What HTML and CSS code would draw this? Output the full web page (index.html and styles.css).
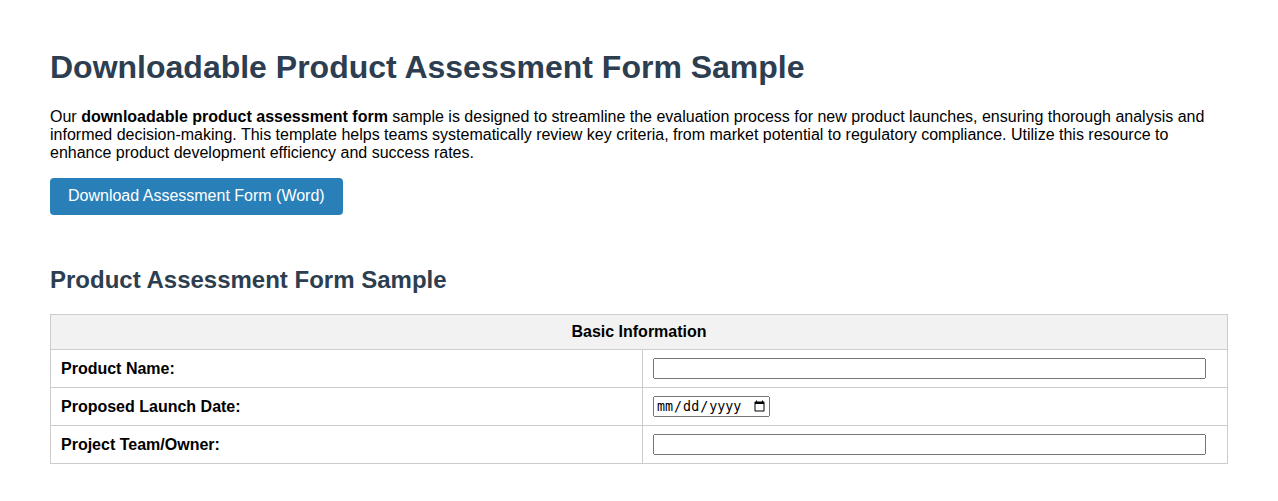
FILE: index.html
```html
<!DOCTYPE html>
<html lang="en">
<head>
<meta charset="utf-8">
<title>Downloadable Product Assessment Form Sample</title>
<link rel="stylesheet" href="styles.css">
</head>
<body>
<main class="page">
  <h1 class="title">Downloadable Product Assessment Form Sample</h1>
  <p class="intro">Our <strong>downloadable product assessment form</strong> sample is designed to streamline the evaluation process for new product launches, ensuring thorough analysis and informed decision-making. This template helps teams systematically review key criteria, from market potential to regulatory compliance. Utilize this resource to enhance product development efficiency and success rates.</p>
  <div class="actions">
    <a class="btn" href="#">Download Assessment Form (Word)</a>
  </div>
  <h2 class="subtitle">Product Assessment Form Sample</h2>
  <table class="form-table">
    <thead>
      <tr><th colspan="2" class="section">Basic Information</th></tr>
    </thead>
    <tbody>
      <tr>
        <td class="label">Product Name:</td>
        <td class="field"><input type="text" class="text-input"></td>
      </tr>
      <tr>
        <td class="label">Proposed Launch Date:</td>
        <td class="field"><input type="date" class="date-input"></td>
      </tr>
      <tr>
        <td class="label">Project Team/Owner:</td>
        <td class="field"><input type="text" class="text-input"></td>
      </tr>
    </tbody>
  </table>
</main>
</body>
</html>
```
FILE: styles.css
```css
html, body {
  margin: 0;
  background: #ffffff;
}
body {
  font-family: "Liberation Sans", Arial, sans-serif;
  font-size: 16px;
  color: #000;
}
.page {
  padding: 28px 50px;
}
.title {
  font-size: 32px;
  font-weight: bold;
  color: #2c3e50;
  margin: 21px 0 22px;
}
.intro {
  margin: 16px 0;
}
.actions {
  margin: 15px 0 51px;
}
.btn {
  display: inline-block;
  background: #2980b9;
  color: #fff;
  text-decoration: none;
  padding: 9px 18px 10px;
  border-radius: 4px;
  line-height: 18px;
}
.subtitle {
  font-size: 24px;
  font-weight: bold;
  color: #2c3e50;
  margin: 20px 0 20px;
}
.form-table {
  width: 100%;
  border-collapse: collapse;
}
.form-table th,
.form-table td {
  border: 1px solid #cccccc;
  padding: 8px 10px;
  text-align: left;
}
.form-table .section {
  background: #f2f2f2;
  text-align: center;
  font-weight: bold;
}
.form-table .label {
  width: 50.3%;
  font-weight: bold;
}
.text-input {
  width: 98%;
  box-sizing: border-box;
}
.date-input {
  width: 117px;
  box-sizing: border-box;
}
```
